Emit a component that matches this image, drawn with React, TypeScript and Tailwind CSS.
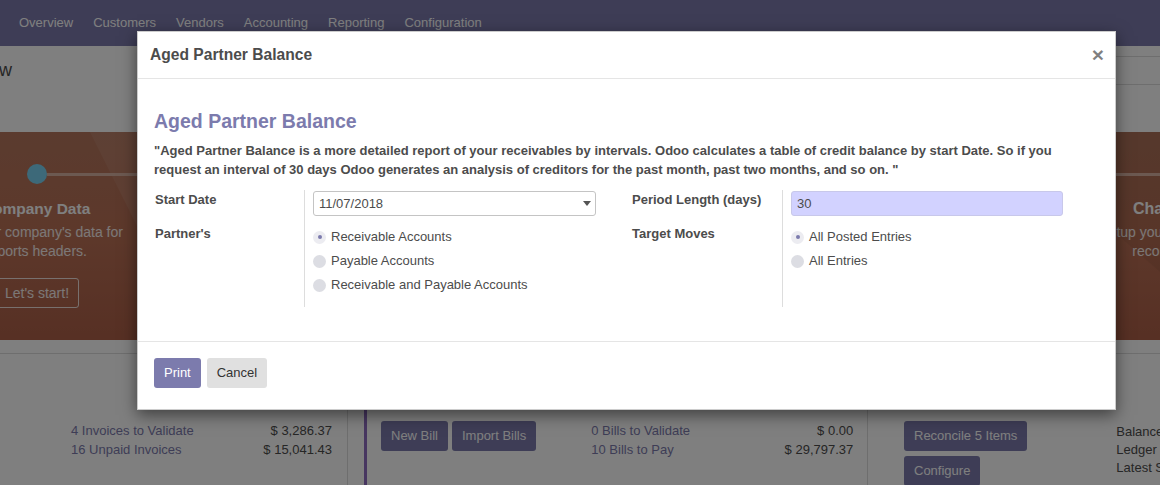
import React from 'react';

const navItems = ['Overview', 'Customers', 'Vendors', 'Accounting', 'Reporting', 'Configuration'];

const Radio = ({ checked, label }: { checked?: boolean; label: string }) => (
  <div className="flex items-center h-[24px] gap-[5px] text-[#4c4c4c]">
    <span
      className={
        checked
          ? 'flex items-center justify-center w-[13px] h-[13px] rounded-full bg-[#ececf1]'
          : 'flex items-center justify-center w-[13px] h-[13px] rounded-full bg-[#dcdde3]'
      }
    >
      {checked && <span className="w-[4px] h-[4px] rounded-full bg-[#7c7bad]" />}
    </span>
    <span>{label}</span>
  </div>
);

const PurpleBtn = ({ children }: { children: React.ReactNode }) => (
  <button className="h-[30px] px-[10px] rounded-[3px] bg-[#7c7bad] text-white text-[13px] whitespace-nowrap">
    {children}
  </button>
);

export default function App() {
  return (
    <div className="relative w-[1160px] h-[485px] overflow-hidden bg-white text-[13px] text-[#4c4c4c] font-['Liberation_Sans',Arial,sans-serif]">
      {/* Top menu */}
      <nav className="h-[46px] bg-[#7c7bad] flex items-center pl-[9px]">
        {navItems.map((item) => (
          <span key={item} className="px-[10px] text-white">
            {item}
          </span>
        ))}
      </nav>

      {/* Control panel */}
      <div className="h-[86px] flex items-start justify-between">
        <div className="ml-[-63px] mt-[12px] text-[18px] leading-[24px] text-[#4c4c4c]">Overview</div>
        <div className="mt-[10px] mr-[-20px] w-[320px] h-[29px] border-y border-[#dcdcdc]" />
      </div>

      {/* Onboarding banner */}
      <div className="relative h-[208px] bg-linear-to-b from-[#b6775e] via-[#bb7156] to-[#ae6048] overflow-hidden">
        <svg className="absolute inset-0" width="1160" height="208" viewBox="0 0 1160 208">
          <polygon points="90,0 260,0 150,120" fill="#ffffff" opacity="0.08" />
          <polygon points="150,120 260,0 300,0 180,208 140,208" fill="#ffffff" opacity="0.05" />
          <polygon points="1000,0 1160,0 1160,140" fill="#000000" opacity="0.05" />
        </svg>
        <div className="absolute left-[47px] right-0 top-[41px] h-[3px] bg-[#d9b3a3]" />
        <div className="relative flex">
          <div className="flex flex-col items-center w-[240px] ml-[-84px] shrink-0">
            <div className="mt-[32px] ml-[2px] w-[20px] h-[20px] rounded-full bg-[#7ad3f2]" />
            <div className="mt-[15px] text-[15.5px] font-bold text-white leading-[20px] whitespace-nowrap">Company Data</div>
            <div className="mt-[4px] text-[14px] leading-[19px] text-white/90 text-center whitespace-nowrap">
              Set your company's data for
              <br />
              reports headers.
            </div>
            <div className="mt-[17px] ml-[2px] h-[30px] px-[9px] flex items-center border border-white/80 rounded-[3px] text-[14px] text-white/90 whitespace-nowrap">
              Let's start!
            </div>
          </div>
        </div>
        <div className="absolute left-[1082px] top-[67px] w-[240px] flex flex-col items-center">
          <div className="text-[16px] font-bold text-white leading-[20px] whitespace-nowrap">Chart of Accounts</div>
          <div className="mt-[4px] text-[14px] leading-[19px] text-white/90 text-center whitespace-nowrap">
            Setup your chart of accounts and
            <br />
            record initial balances.
          </div>
        </div>
      </div>

      {/* Dashboard cards */}
      <div className="mt-[13px] border-t border-[#dcdcdc] flex h-[200px]">
        <div className="w-[348px] shrink-0 border-r border-[#dcdcdc] pt-[67px]">
          <div className="ml-[71px] w-[261px] leading-[19px]">
            <div className="flex justify-between">
              <span className="text-[#7c7bad]">4 Invoices to Validate</span>
              <span>$ 3,286.37</span>
            </div>
            <div className="flex justify-between">
              <span className="text-[#7c7bad]">16 Unpaid Invoices</span>
              <span>$ 15,041.43</span>
            </div>
          </div>
        </div>
        <div className="ml-[16px] w-[504px] shrink-0 border-l-[3px] border-[#8e6cc0] border-r border-r-[#dcdcdc] flex pt-[67px]">
          <div className="ml-[14px] flex gap-[4px] h-[30px]">
            <PurpleBtn>New Bill</PurpleBtn>
            <PurpleBtn>Import Bills</PurpleBtn>
          </div>
          <div className="ml-[55px] w-[262px] leading-[19px]">
            <div className="flex justify-between">
              <span className="text-[#7c7bad]">0 Bills to Validate</span>
              <span>$ 0.00</span>
            </div>
            <div className="flex justify-between">
              <span className="text-[#7c7bad]">10 Bills to Pay</span>
              <span>$ 29,797.37</span>
            </div>
          </div>
        </div>
        <div className="flex-1 flex pt-[67px]">
          <div className="ml-[36px] flex flex-col items-start gap-[5px]">
            <PurpleBtn>Reconcile 5 Items</PurpleBtn>
            <PurpleBtn>Configure</PurpleBtn>
          </div>
          <div className="ml-[89px] mt-[2px] leading-[18px] whitespace-nowrap">
            <div>Balance</div>
            <div>Ledger</div>
            <div>Latest Statement</div>
          </div>
        </div>
      </div>

      {/* Backdrop */}
      <div className="absolute inset-0 z-10 bg-[rgba(0,0,0,0.5)]" />

      {/* Modal */}
      <div className="absolute z-20 left-[137px] top-[31px] w-[979px] bg-white border border-black/20 shadow-[0_5px_15px_rgba(0,0,0,0.5)]">
        <div className="h-[47px] px-[12px] flex items-center justify-between border-b border-[#e5e5e5]">
          <h4 className="text-[15.6px] font-bold text-[#4c4c4c]">Aged Partner Balance</h4>
          <button className="text-[21px] font-bold leading-none text-black/50 mr-[-1px] mt-[-2px]">×</button>
        </div>

        <div className="h-[262px] px-[16px] pt-[31px]">
          <h2 className="text-[19.5px] leading-[23px] font-bold text-[#7c7bad]">Aged Partner Balance</h2>
          <p className="mt-[8px] font-bold leading-[19px] text-[#4c4c4c]">
            "Aged Partner Balance is a more detailed report of your receivables by intervals. Odoo calculates a table of
            credit balance by start Date. So if you request an interval of 30 days Odoo generates an analysis of creditors
            for the past month, past two months, and so on. "
          </p>

          <div className="mt-[11px] flex">
            <div className="flex w-[478px] shrink-0">
              <div className="w-[150px] shrink-0 font-bold leading-[19px] pl-px">
                <div className="h-[34px]">Start Date</div>
                <div>Partner's</div>
              </div>
              <div className="flex-1 border-l border-[#dddddd] pl-[8px] pb-[10px]">
                <div className="h-[35px] pt-[1px]">
                  <div className="w-[283px] h-[25px] border border-[#c4c4c4] rounded-[3px] pl-[5px] pr-[4px] flex items-center justify-between">
                    <span>11/07/2018</span>
                    <span className="w-0 h-0 border-x-[4px] border-x-transparent border-t-[5px] border-t-[#555555]" />
                  </div>
                </div>
                <Radio checked label="Receivable Accounts" />
                <Radio label="Payable Accounts" />
                <Radio label="Receivable and Payable Accounts" />
              </div>
            </div>
            <div className="flex flex-1">
              <div className="w-[150px] shrink-0 font-bold leading-[19px]">
                <div className="h-[34px]">Period Length (days)</div>
                <div>Target Moves</div>
              </div>
              <div className="flex-1 border-l border-[#dddddd] pl-[8px]">
                <div className="h-[35px] pt-[1px]">
                  <div className="w-[272px] h-[25px] border border-[#c8c8ea] rounded-[3px] bg-[#d2d2ff] pl-[5px] flex items-center">
                    30
                  </div>
                </div>
                <Radio checked label="All Posted Entries" />
                <Radio label="All Entries" />
              </div>
            </div>
          </div>
        </div>

        <div className="h-[68px] border-t border-[#e5e5e5] px-[16px] pt-[16px] flex items-start gap-[6px]">
          <button className="h-[30px] px-[10px] rounded-[3px] bg-[#7c7bad] text-white">Print</button>
          <button className="h-[30px] px-[10px] rounded-[3px] bg-[#e0e0e0] text-[#333333]">Cancel</button>
        </div>
      </div>
    </div>
  );
}
